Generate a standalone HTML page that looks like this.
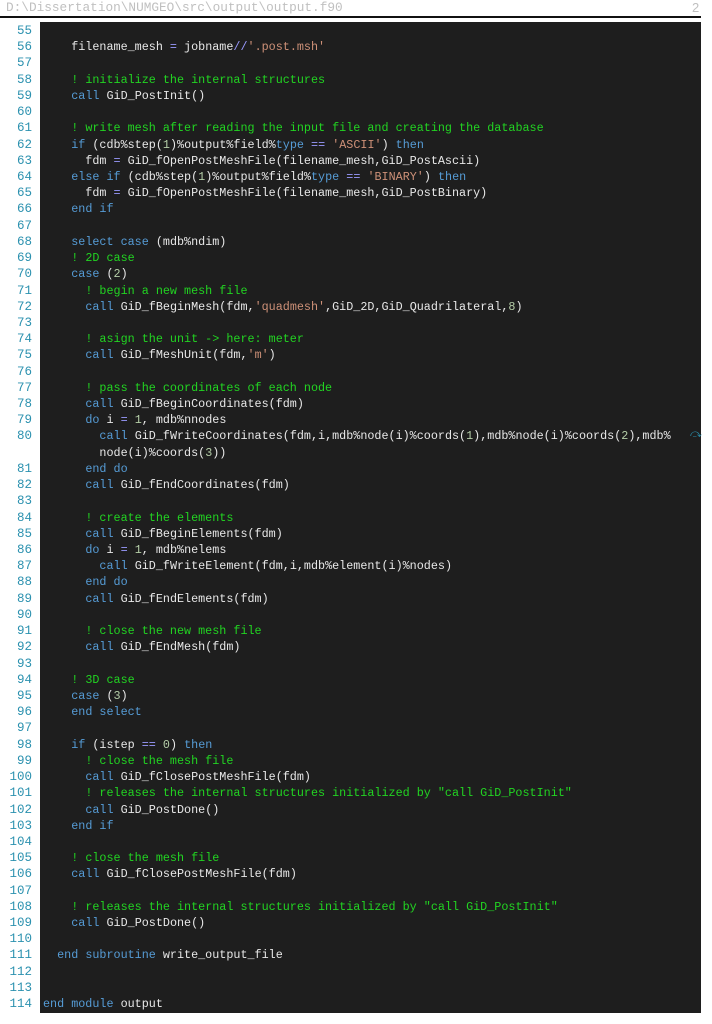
<!DOCTYPE html>
<html><head><meta charset="utf-8"><style>
html,body{margin:0;padding:0;background:#fff;width:712px;height:1024px;overflow:hidden}
.hdr{position:absolute;left:6px;top:0;font:12.75px "Liberation Mono",monospace;color:#c0c0c0}
.pg{position:absolute;left:692px;top:0;font:13px "Liberation Sans",sans-serif;color:#c0c0c0}
.rule{position:absolute;left:0;top:16px;width:701px;height:2px;background:#111}
.box{position:absolute;left:40px;top:22px;width:661px;height:991px;background:#1e1e1e}
.nums{position:absolute;left:0;top:23px;width:32px;text-align:right;font:12.5px/16.217px "Liberation Mono",monospace;color:#2b91af}
.code{position:absolute;left:43px;top:23px;font:11.75px/16.217px "Liberation Mono",monospace;color:#e8e8e8;white-space:pre}
.k{color:#569cd6}.c{color:#22d422}.s{color:#ce9178}.n{color:#b5cea8}.o{color:#9a9aff}
.wrap{position:absolute;left:690px;top:428px;color:#2b91af;font:11px "Liberation Sans",sans-serif}
</style></head><body>
<div class="hdr">D:\Dissertation\NUMGEO\src\output\output.f90</div>
<div class="pg">2</div>
<div class="rule"></div>
<div class="box"></div>
<div class="nums">55<br>56<br>57<br>58<br>59<br>60<br>61<br>62<br>63<br>64<br>65<br>66<br>67<br>68<br>69<br>70<br>71<br>72<br>73<br>74<br>75<br>76<br>77<br>78<br>79<br>80<br><br>81<br>82<br>83<br>84<br>85<br>86<br>87<br>88<br>89<br>90<br>91<br>92<br>93<br>94<br>95<br>96<br>97<br>98<br>99<br>100<br>101<br>102<br>103<br>104<br>105<br>106<br>107<br>108<br>109<br>110<br>111<br>112<br>113<br>114</div>
<div class="wrap">⤼</div>
<div class="code">
    filename_mesh <span class="o">=</span> jobname<span class="o">//</span><span class="s">'.post.msh'</span>

    <span class="c">! initialize the internal structures</span>
    <span class="k">call</span> GiD_PostInit()

    <span class="c">! write mesh after reading the input file and creating the database</span>
    <span class="k">if</span> (cdb%step(<span class="n">1</span>)%output%field%<span class="k">type</span> <span class="o">==</span> <span class="s">'ASCII'</span>) <span class="k">then</span>
      fdm <span class="o">=</span> GiD_fOpenPostMeshFile(filename_mesh,GiD_PostAscii)
    <span class="k">else if</span> (cdb%step(<span class="n">1</span>)%output%field%<span class="k">type</span> <span class="o">==</span> <span class="s">'BINARY'</span>) <span class="k">then</span>
      fdm <span class="o">=</span> GiD_fOpenPostMeshFile(filename_mesh,GiD_PostBinary)
    <span class="k">end if</span>

    <span class="k">select case</span> (mdb%ndim)
    <span class="c">! 2D case</span>
    <span class="k">case</span> (<span class="n">2</span>)
      <span class="c">! begin a new mesh file</span>
      <span class="k">call</span> GiD_fBeginMesh(fdm,<span class="s">'quadmesh'</span>,GiD_2D,GiD_Quadrilateral,<span class="n">8</span>)

      <span class="c">! asign the unit -> here: meter</span>
      <span class="k">call</span> GiD_fMeshUnit(fdm,<span class="s">'m'</span>)

      <span class="c">! pass the coordinates of each node</span>
      <span class="k">call</span> GiD_fBeginCoordinates(fdm)
      <span class="k">do</span> i <span class="o">=</span> <span class="n">1</span>, mdb%nnodes
        <span class="k">call</span> GiD_fWriteCoordinates(fdm,i,mdb%node(i)%coords(<span class="n">1</span>),mdb%node(i)%coords(<span class="n">2</span>),mdb%
        node(i)%coords(<span class="n">3</span>))
      <span class="k">end do</span>
      <span class="k">call</span> GiD_fEndCoordinates(fdm)

      <span class="c">! create the elements</span>
      <span class="k">call</span> GiD_fBeginElements(fdm)
      <span class="k">do</span> i <span class="o">=</span> <span class="n">1</span>, mdb%nelems
        <span class="k">call</span> GiD_fWriteElement(fdm,i,mdb%element(i)%nodes)
      <span class="k">end do</span>
      <span class="k">call</span> GiD_fEndElements(fdm)

      <span class="c">! close the new mesh file</span>
      <span class="k">call</span> GiD_fEndMesh(fdm)

    <span class="c">! 3D case</span>
    <span class="k">case</span> (<span class="n">3</span>)
    <span class="k">end select</span>

    <span class="k">if</span> (istep <span class="o">==</span> <span class="n">0</span>) <span class="k">then</span>
      <span class="c">! close the mesh file</span>
      <span class="k">call</span> GiD_fClosePostMeshFile(fdm)
      <span class="c">! releases the internal structures initialized by "call GiD_PostInit"</span>
      <span class="k">call</span> GiD_PostDone()
    <span class="k">end if</span>

    <span class="c">! close the mesh file</span>
    <span class="k">call</span> GiD_fClosePostMeshFile(fdm)

    <span class="c">! releases the internal structures initialized by "call GiD_PostInit"</span>
    <span class="k">call</span> GiD_PostDone()

  <span class="k">end subroutine</span> write_output_file


<span class="k">end module</span> output</div>
</body></html>
